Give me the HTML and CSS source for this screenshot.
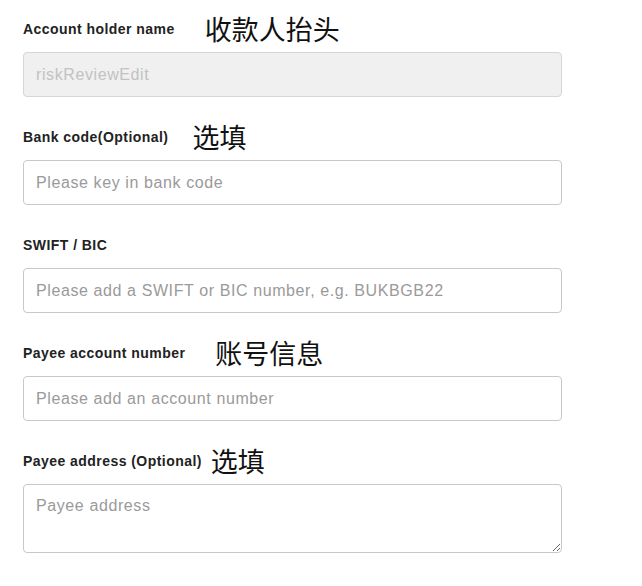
FILE: index.html
```html
<!DOCTYPE html>
<html lang="en">
<head>
<meta charset="utf-8">
<link rel="stylesheet" href="styles.css">
</head>
<body>
<form class="form">
  <div class="field">
    <div class="label-row">
      <label class="label">Account holder name</label>
      <span class="note note-a">收款人抬头</span>
    </div>
    <input class="input" type="text" value="riskReviewEdit" disabled>
  </div>
  <div class="field">
    <div class="label-row">
      <label class="label">Bank code(Optional)</label>
      <span class="note note-b">选填</span>
    </div>
    <input class="input" type="text" placeholder="Please key in bank code">
  </div>
  <div class="field">
    <div class="label-row">
      <label class="label">SWIFT / BIC</label>
    </div>
    <input class="input" type="text" placeholder="Please add a SWIFT or BIC number, e.g. BUKBGB22">
  </div>
  <div class="field">
    <div class="label-row">
      <label class="label">Payee account number</label>
      <span class="note note-a">账号信息</span>
    </div>
    <input class="input" type="text" placeholder="Please add an account number">
  </div>
  <div class="field">
    <div class="label-row">
      <label class="label">Payee address (Optional)</label>
      <span class="note note-c">选填</span>
    </div>
    <textarea class="input textarea" placeholder="Payee address"></textarea>
  </div>
</form>
</body>
</html>
```
FILE: styles.css
```css
html, body {
  margin: 0;
  padding: 0;
  background: #ffffff;
}
.form {
  display: flex;
  flex-direction: column;
  gap: 26px;
  padding: 15px 0 0 23px;
  width: 539px;
}
.field {
  display: flex;
  flex-direction: column;
  gap: 9px;
}
.label-row {
  display: flex;
  align-items: center;
  height: 28px;
}
.label {
  font-family: "Liberation Sans", Arial, sans-serif;
  font-weight: bold;
  font-size: 14px;
  letter-spacing: 0.45px;
  color: #222222;
}
.note {
  font-family: "Noto Sans CJK SC", sans-serif;
  font-size: 27px;
  line-height: 28px;
  color: #111111;
}
.note-a { margin-left: 30px; }
.note-b { margin-left: 24px; }
.note-c { margin-left: 9px; }
.input {
  box-sizing: border-box;
  width: 539px;
  height: 45px;
  margin: 0;
  padding: 0 12px;
  border: 1px solid #c8c8c8;
  border-radius: 4px;
  background: #ffffff;
  font-family: "Liberation Sans", Arial, sans-serif;
  font-size: 16px;
  letter-spacing: 0.6px;
  color: #333333;
  outline: none;
}
.input::placeholder {
  color: #9a9a9a;
}
.input:disabled {
  background: #f0f0f0;
  color: #c2c2c2;
  border-color: #d6d6d6;
}
.textarea {
  height: 69px;
  padding: 12px 12px;
  resize: vertical;
  display: block;
}
```
